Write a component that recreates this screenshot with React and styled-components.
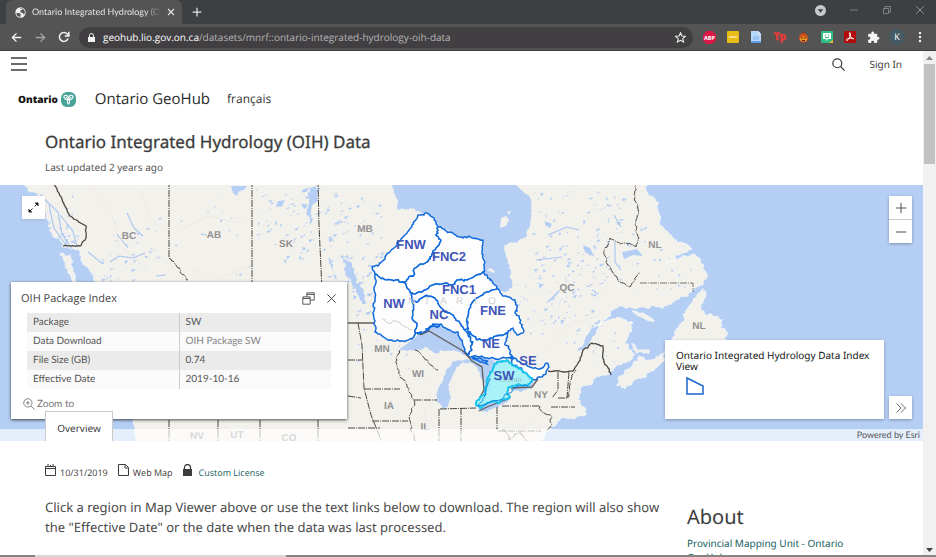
import React from "react";
import styled, { createGlobalStyle } from "styled-components";

const Global = createGlobalStyle`
  * { box-sizing: border-box; }
  html, body, #root { height: 100%; }
  body { margin: 0; background: #fff; font-family: "Noto Sans", "Open Sans", sans-serif; color: #3c3c3c; text-rendering: geometricPrecision; }
  button { border: 0; padding: 0; background: none; color: inherit; font: inherit; cursor: pointer; text-rendering: inherit; }
  h1, h2, p { margin: 0; font-weight: 400; }
  a { color: #17605f; text-decoration: none; }
  svg { display: block; }
`;

/* ---------- browser frame ---------- */

const Window = styled.div`
  display: flex;
  flex-direction: column;
  height: 100vh;
  overflow: hidden;
`;

const TabStrip = styled.div`
  display: flex;
  align-items: stretch;
  height: 24px;
  flex: none;
  padding-left: 6px;
  background: #3c4043;
  color: #e3e3e3;
`;

const BrowserTab = styled.div`
  display: flex;
  align-items: center;
  gap: 6px;
  width: 176px;
  padding: 0 7px 0 9px;
  border-radius: 6px 6px 0 0;
  background: #545454;
`;

const TabTitle = styled.span`
  flex: 1;
  overflow: hidden;
  white-space: nowrap;
  font: 9px/14px Lato, sans-serif;
  mask-image: linear-gradient(to right, #000 88%, transparent);
`;

const NewTab = styled.button`
  width: 30px;
  display: grid;
  place-items: center;
`;

const WindowButtons = styled.div`
  display: grid;
  grid-template-columns: repeat(4, 33px);
  margin-left: auto;
  color: #999c9e;
  button { display: grid; place-items: center; padding-bottom: 4px; }
`;

const Toolbar = styled.div`
  display: flex;
  align-items: center;
  height: 27px;
  flex: none;
  padding: 0 4px 0 4px;
  background: #545454;
  border-bottom: 1px solid #3f3f3f;
  color: #f2f2f2;
`;

const NavButton = styled.button`
  width: 24px;
  height: 22px;
  display: grid;
  place-items: center;
  opacity: ${(p) => (p.disabled ? 0.5 : 1)};
`;

const AddressBar = styled.label`
  display: flex;
  align-items: center;
  flex: 1;
  height: 21px;
  margin-left: 3px;
  padding: 0 7px 0 9px;
  gap: 8px;
  border-radius: 11px;
  background: #413f42;
  font: 10px/14px "Open Sans", sans-serif;
`;

const Address = styled.span`
  flex: 1;
  color: #b5b5b5;
  b { font-weight: 500; color: #fff; }
`;

const Extensions = styled.div`
  display: grid;
  grid-template-columns: repeat(10, 1fr);
  width: 234px;
  margin-left: 5px;
  button { display: grid; place-items: center; }
`;

const Viewport = styled.div`
  display: flex;
  flex: 1;
  min-height: 0;
`;

const Scrollbar = styled.div`
  display: flex;
  flex-direction: column;
  align-items: center;
  width: 13px;
  flex: none;
  padding: 5px 1px 2px;
  background: #f1f1f1;
`;

const Thumb = styled.div`
  width: 11px;
  height: 100px;
  margin: 3px 0 auto;
  background: #c1c1c1;
`;

const DesktopEdge = styled.div`
  height: 2px;
  flex: none;
  background: linear-gradient(to right, #858585 35px, #d8d8d8 35px, #d8d8d8 286px, #858585 286px);
`;

/* ---------- page ---------- */

const Page = styled.div`
  flex: 1;
  min-width: 0;
  overflow: hidden;
  background: #fff;
`;

const TopBar = styled.header`
  display: flex;
  align-items: center;
  height: 26px;
  padding: 0 21px 0 11px;
`;

const SignIn = styled.button`
  margin-left: 24px;
  font-size: 10px;
  line-height: 16px;
`;

const Search = styled.button`
  margin-left: auto;
`;

const BrandRow = styled.nav`
  display: flex;
  align-items: center;
  height: 44px;
  padding-left: 18px;
  font-family: "Open Sans", sans-serif;
`;

const Logo = styled.a`
  display: flex;
  align-items: center;
  gap: 3px;
  margin-right: 19px;
  color: #111;
  font: 800 10px/16px "Open Sans", sans-serif;
`;

const SiteName = styled.a`
  margin-right: 17px;
  color: #2b2b2b;
  font-size: 15px;
  line-height: 20px;
`;

const Language = styled.a`
  color: #333;
  font-size: 12px;
  line-height: 18px;
`;

const Heading = styled.div`
  height: 64px;
  padding: 8px 45px 0;
`;

const Title = styled.h1`
  font-size: 17px;
  line-height: 26px;
  -webkit-text-stroke: 0.3px currentColor;
`;

const Updated = styled.p`
  margin-top: 4px;
  color: #555;
  font-size: 10px;
  line-height: 16px;
`;

const MapFrame = styled.section`
  position: relative;
  height: 256px;
  background: #b5cff4;
  overflow: hidden;
`;

const MapDrawing = styled.svg`
  width: 100%;
  height: 100%;
`;

const Floating = styled.div`
  position: absolute;
  top: ${(p) => p.$top ?? "auto"};
  right: ${(p) => p.$right ?? "auto"};
  bottom: ${(p) => p.$bottom ?? "auto"};
  left: ${(p) => p.$left ?? "auto"};
  width: ${(p) => p.$width};
  background: #fff;
  box-shadow: 0 1px 3px rgba(0, 0, 0, ${(p) => p.$shade ?? 0.3});
`;

const MapButton = styled.button`
  display: grid;
  place-items: center;
  width: 23px;
  height: 23px;
  color: #555;
  & + & { border-top: 1px solid #ccc; height: 24px; }
`;

const PopupHead = styled.div`
  display: flex;
  align-items: center;
  gap: 11px;
  height: 31px;
  padding: 2px 10px 0;
  color: #444;
`;

const PopupTitle = styled.h2`
  flex: 1;
  font-family: "Open Sans", sans-serif;
  font-size: 11px;
  line-height: 16px;
`;

const Fields = styled.table`
  width: 304px;
  margin-left: 16px;
  border-collapse: collapse;
  color: #555;
  font: 10px/15px Lato, sans-serif;
  tr:nth-child(odd) { background: #ebebeb; }
  tr:nth-child(even) { background: #fafafa; }
  th, td { height: 19px; padding: 2px 6px; text-align: left; font-weight: 400; }
  th { width: 50%; border-right: 1px solid #ccc; }
  a { color: #858585; }
`;

const ZoomTo = styled.button`
  display: flex;
  align-items: center;
  gap: 2px;
  height: 30px;
  margin-left: 12px;
  color: #777;
  font: 10px/14px Lato, sans-serif;
`;

const Legend = styled.div`
  height: 79px;
  padding: 10px 11px;
  color: #151515;
  p { font-size: 10px; line-height: 11px; }
  svg { margin: 4px 0 0 9px; }
`;

const Attribution = styled.div`
  position: absolute;
  inset: auto 0 0 0;
  height: 12px;
  padding-right: 3px;
  background: rgba(255, 255, 255, 0.65);
  color: #555;
  font: 9px/12px Lato, sans-serif;
  text-align: right;
`;

const OverviewTab = styled.button`
  position: absolute;
  left: 45px;
  bottom: 0;
  width: 68px;
  height: 30px;
  padding-top: 2px;
  border: 1px solid #ccc;
  border-bottom: 0;
  background: #fff;
  color: #444;
  font-size: 10px;
`;

const Details = styled.main`
  display: grid;
  grid-template-columns: minmax(0, 642px) minmax(0, 1fr);
  padding: 22px 45px 0;
`;

const Meta = styled.div`
  display: flex;
  align-items: flex-end;
  gap: 10px;
  height: 16px;
  font: 9px/12px "Open Sans", sans-serif;
`;

const MetaItem = styled.span`
  display: flex;
  align-items: flex-end;
  gap: ${(p) => p.$gap ?? "4px"};
  svg { margin-bottom: 3px; }
`;

const Description = styled.p`
  margin-top: 18px;
  padding-right: 12px;
  color: #4a4a4a;
  font-size: 13px;
  line-height: 20px;
`;

const About = styled.aside`
  padding-top: 40px;
  h2 { font-size: 20px; line-height: 28px; }
  a { display: block; width: 170px; margin-top: 5px; font-size: 10px; line-height: 14px; }
`;

/* ---------- map geometry ---------- */

function randomFrom(seed) {
  let s = seed;
  return () => {
    s = (s * 16807) % 2147483647;
    return s / 2147483647;
  };
}

/* Subdivides a polyline with small offsets so that borders look surveyed. */
function rough(text, amp = 2, closed = true, seed = 7) {
  let pts = text.trim().split(/\s+/).map((p) => p.split(",").map(Number));
  if (closed) pts.push(pts[0]);
  for (let k = 0; k < 3; k++) {
    const out = [];
    for (let i = 0; i < pts.length - 1; i++) {
      const [a, b] = pts[i];
      const [c, d] = pts[i + 1];
      const len = Math.hypot(c - a, d - b);
      out.push(pts[i]);
      if (len > 2.2) {
        /* the offset depends only on the segment, so shared edges stay together */
        const r = randomFrom(Math.round(Math.abs((a + c) * 131 + (b + d) * 977)) + seed);
        r();
        const q = Math.min(amp, len / 3);
        out.push([(a + c) / 2 + (r() - 0.5) * 2 * q, (b + d) / 2 + (r() - 0.5) * 2 * q]);
      }
    }
    out.push(pts[pts.length - 1]);
    pts = out;
  }
  return "M" + pts.map(([x, y]) => x.toFixed(1) + " " + y.toFixed(1)).join("L") + (closed ? "Z" : "");
}

/* [x, y, width, height, count, size] */
const lakeFields = [
  [255, 190, 60, 75, 60, 3], [298, 188, 18, 40, 14, 6], [322, 190, 60, 75, 60, 3], [325, 255, 45, 60, 35, 4],
  [110, 215, 50, 60, 18, 3], [100, 250, 60, 30, 22, 3], [175, 190, 75, 85, 18, 2], [532, 190, 80, 80, 60, 3],
  [532, 255, 80, 75, 60, 3], [600, 190, 45, 100, 35, 3], [515, 270, 60, 65, 45, 2], [30, 188, 45, 40, 22, 3],
  [350, 325, 60, 45, 14, 2], [565, 325, 60, 40, 18, 2], [55, 225, 25, 25, 18, 3], [650, 240, 42, 50, 14, 2],
  [325, 290, 60, 30, 14, 2], [400, 192, 25, 12, 3, 1],
];

const lakePath = lakeFields
  .map(([x, y, w, h, n, size], k) => {
    const r = randomFrom(4001 + k * 977);
    return Array.from({ length: n }, () => {
      const px = x + r() * w;
      const py = y + r() * h;
      const a = (r() + 0.2) * size * 1.3;
      const b = (r() - 0.7) * size;
      return `M${px.toFixed(1)} ${py.toFixed(1)}l${a.toFixed(1)} ${b.toFixed(1)} ${(-a * 0.4).toFixed(1)} ${(r() * size * 0.8 + 0.5).toFixed(1)} ${(-a * 0.5).toFixed(1)} ${(r() * size * 0.3).toFixed(1)}z`;
    }).join("");
  })
  .join("");

const mainland =
  "22,180 30,192 38,197 45,205 46,217 49,228 56,238 62,247 74,249 82,256 86,266 94,276 100,290 115,320 122,350 125,390 133,420 137,445 541,445 545,434 552,426 560,420 572,418 587,414 582,406 577,399 580,388 593,380 610,374 620,365 632,359 635,355 628,349 625,342 629,334 633,323 623,320 607,321 598,328 588,346 578,351 583,344 588,334 597,326 608,317 617,307 640,307 663,308 673,302 692,292 703,282 704,265 695,254 680,258 667,264 675,256 692,250 683,243 673,238 667,231 660,225 658,208 650,196 645,180";

const waters = [
  "392,180 395,195 398,210 410,208 422,213 434,219 440,228 463,238 483,240 485,262 483,272 497,288 504,292 512,287 510,276 508,263 504,245 518,241 527,235 531,218 530,198 513,180",
  "400,350 409,342 417,336 430,327 437,323 453,330 462,338 467,355 458,352 443,351 434,353 425,347 414,350 407,351",
  "453,361 444,376 438,390 437,402 442,409 448,406 450,392 451,380 456,367 464,362 474,364 480,372 485,385 483,396 491,388 491,374 500,363 490,358 473,359",
  "478,409 488,402 500,401 511,396 507,402 492,409 482,412",
  "507,390 516,384 528,385 534,381 532,389 519,391",
  "343,258 350,261 354,271 357,284 364,291 365,304 360,300 354,286 347,277",
  "328,258 333,267 337,282 334,276",
];

const regions = {
  fnw: "372,267 378,266 385,257 397,245 405,235 412,225 418,215 425,213 432,217 438,227 436,235 441,240 437,247 432,255 427,262 415,268 414,275 403,282 387,280 375,274",
  fnc2: "438,227 450,232 463,238 472,238 483,240 482,252 485,262 483,272 467,280 457,280 455,284 433,285 417,293 412,293 403,282 414,275 415,268 427,262 432,255 437,247 441,240 436,235",
  nw: "375,274 387,280 403,282 412,293 413,303 413,320 417,325 415,333 412,339 403,341 393,341 385,338 375,332 373,313 375,298",
  nc: "417,302 425,296 435,298 438,303 445,312 453,315 460,323 465,330 473,342 472,350 467,355 462,340 458,332 450,330 442,325 433,324 428,331 415,333 417,325 413,320 413,303",
  fnc1: "412,293 417,293 433,285 455,284 457,280 467,280 483,272 490,280 497,289 487,292 475,300 470,308 468,317 468,328 465,330 460,323 453,315 445,312 438,303 435,298 425,296 417,302 413,303",
  fne: "487,292 497,289 505,296 515,300 517,308 515,313 522,325 523,333 517,335 513,328 508,332 503,335 493,338 485,340 477,340 468,332 468,317 470,308 475,300",
  ne: "468,332 477,340 485,340 493,338 503,335 508,333 505,343 510,350 512,359 497,359 485,358 470,357 467,355 472,350 473,342",
  se: "512,356 517,361 530,367 542,368 547,363 549,367 543,375 535,380 531,380 522,370 512,365",
};

const southWest =
  "497,362 507,360 512,365 522,370 532,378 528,386 517,385 508,388 507,394 510,397 500,402 487,403 480,408 476,405 478,400 485,395 485,388 488,380 490,372 493,370";

const dashed = [
  "169,180 169,258", "252,180 252,290", "318,180 319,225 322,290",
  "358,323 362,345 364,388 371,415 381,440", "348,360 363,360", "348,396 361,398", "348,428 380,428",
  "364,389 400,389", "372,421 408,421", "414,400 437,400", "439,409 439,442", "461,408 461,442",
  "497,407 497,430", "440,409 476,408", "502,406 540,406", "558,372 558,390 552,398", "558,398 568,398",
  "569,372 567,398", "169,420 169,442", "218,420 218,442", "260,420 260,442", "318,420 318,442",
  "498,431 541,431", "551,407 575,407",
];

const roughDashed = [
  "169,258 176,265 180,272 188,280", "400,350 397,360 399,374 407,385 411,394 415,405 409,416 410,430 416,442",
  "415,350 428,360 438,370", "540,406 545,414 552,417 551,426 546,430",
  "635,180 634,195 638,205 635,225 639,238 637,246 628,244 617,242 610,238 604,250 606,262 613,272 618,281 630,287 636,277 640,273",
  "568,398 570,385 576,370", "502,430 510,440 520,432 528,442",
];

const placeNames = [
  ["BC", 129, 239], ["AB", 214, 238], ["SK", 286, 247], ["MB", 365, 232], ["QC", 567, 291], ["NL", 655, 248],
  ["NL", 699, 329], ["MN", 382, 352], ["WI", 418, 377], ["IA", 389, 409], ["IL", 425, 430], ["NY", 541, 398],
];

const fadedNames = [["NV", 197, 439], ["UT", 237, 438], ["CO", 289, 441]];

const regionNames = [
  ["FNW", 411, 249], ["FNC2", 449, 261], ["FNC1", 459, 294], ["NW", 394, 308], ["NC", 439, 319],
  ["FNE", 493, 315], ["NE", 491, 348], ["SE", 528, 365], ["SW", 504, 380],
];

const Place = styled.text`
  fill: #909090;
  font: bold 10px "Liberation Sans", sans-serif;
  text-anchor: middle;
  paint-order: stroke;
  stroke: #f3f1ec;
  stroke-width: 2px;
`;

const Region = styled.text`
  fill: #3f56b8;
  font: bold 13px "Liberation Sans", sans-serif;
  text-anchor: middle;
`;

function HydrologyMap() {
  return (
    <MapDrawing viewBox="0 185 923 256" preserveAspectRatio="xMidYMid slice" role="img" aria-label="Map of Ontario package regions">
      <rect x="-500" y="185" width="2000" height="256" fill="#b5cff4" />
      <g fill="#f3f1ec" stroke="#fafbfc" strokeWidth="0.6">
        <path d={rough(mainland, 2.5)} />
        <path d={rough("60,253 66,256 71,254 71,265 76,276 78,285 72,280 65,268", 1.5)} />
        <path d={rough("703,288 697,295 690,305 684,318 677,328 673,345 727,345 724,338 728,333 720,328 723,319 713,316 704,311 701,306 706,293", 2)} />
        <path d={rough("632,311 643,313 654,320 648,321 638,316", 1)} />
        <path d={rough("617,386 625,389 635,380 646,374 665,360 665,351 656,356 649,360 640,356 634,362 630,368 620,376", 2)} />
        <path d={rough("632,343 638,350 650,350 649,354 636,353", 1)} />
      </g>
      <g fill="none" stroke="#e9e6e0" strokeWidth="0.6">
        <path d="M92 188l20 28 8 30 22 18M140 190l12 30 14 12M180 230l28 -14 36 8M190 270l30 8 30-12M350 310l30 8M410 365l18 20M430 440l-6-30M520 430l20-20M545 350l20-24 32-10M590 270l15 25M540 215l30 14" />
      </g>
      <path d={lakePath} fill="#b5cff4" />
      <g fill="#b5cff4">
        {waters.map((d) => <path key={d} d={rough(d, 1.3)} />)}
        <path d="M231 186h16l-3 4-5 1-2 5-4-3zM310 188l6-2 2 15-6 4-2 12-4-3 3-11zM278 201l6 0-2 5-6 1zM583 245l7 3 4 8-5-1-5-5zM622 252l15-3 6 7-10-1-9 4zM545 221l7 3-2 4-5-3z" />
        <path d="M546 303l12-12 4-2-10 11-5 3z" />
      </g>
      <g fill="none" stroke="#a8c5f0">
        <path d="M127 213l7 15 9 8M117 234l11 14M110 262l9-6 14 2 12-5M88 252l15 12M40 195l18 17 4 22 12 18M49 205l5 23 14 20M60 215l13 16 4 16M156 276l10-1M201 234l9 2M592 290q6 2 3 6l-4-2M615 242v20l6 8M548 235l19-8 12 3M536 260l26-3M614 215l7 12" strokeWidth="1.1" />
      </g>
      <g fill="#f3f1ec">
        <path d="M487 270l3-2 5 3-1 2zM501 218l5-2 3 4-3 6-6 2zM507 212l4-1-2 4z" />
      </g>
      <g fill="none" stroke="#4b4843" strokeWidth="1" strokeDasharray="7 1 1 1">
        {dashed.map((d) => <path key={d} d={"M" + d} />)}
        {roughDashed.map((d) => <path key={d} d={rough(d, 1.2, false)} />)}
        <path d="M640 283h53v9" stroke="#7d7869" />
      </g>
      <g fill="none" stroke="#4b4843" strokeWidth="1.3">
        <path d={rough("54,184 62,199 70,216 78,221 86,226 86,238 80,246 63,246", 0.6, false)} />
        <path d="M348 323h27" />
        <path d={rough("548,371 573,371 578,363 583,350 592,343 603,346 604,362 611,375", 0.8, false)} />
      </g>
      <g fill="#fff" fillOpacity="0.86" stroke="#126bdc" strokeWidth="1.5" strokeLinejoin="round">
        {Object.entries(regions).map(([key, d]) => <path key={key} d={rough(d, 1.2)} />)}
      </g>
      <path d={rough("382,318 388,323 396,321 404,326 412,330", 1.5, false)} fill="none" stroke="#cfccc6" />
      <path d={rough("472,358 480,358 488,361 487,364 480,362", 1)} fill="#8fb4ee" stroke="#126bdc" strokeWidth="1.5" />
      <path d={rough("417,334 426,332 433,325 440,326", 1.4, false)} fill="none" stroke="#126bdc" strokeWidth="2" />
      <path d="M420 335l9-4 34 20 9 10 10 6 2 23-4 7M479 411l8-4 23-9M511 388l21-1 6-8" fill="none" stroke="#605d5d" strokeWidth="1.3" />
      <path d={rough(southWest, 1)} fill="#a0f2fa" fillOpacity="0.9" stroke="#18c3ec" strokeWidth="2" strokeLinejoin="round" />
      <path d={rough("490,378 488,384 486,394 478,406 500,400 507,394 517,386 528,386", 1, false)} fill="none" stroke="#1389d9" strokeWidth="1" />
      <g fill="#d2d0d2" fontFamily="Liberation Sans, sans-serif" fontSize="10">
        <text x="408" y="304">N</text><text x="424" y="304">T</text><text x="440" y="304">A</text>
        <text x="456" y="304">R</text><text x="474" y="304">I</text><text x="488" y="304">O</text>
      </g>
      <text x="498" y="382" fill="#91bfc5" fontFamily="Liberation Sans, sans-serif" fontSize="7">Toronto</text>
      {placeNames.map(([name, x, y]) => <Place key={name + x} x={x} y={y}>{name}</Place>)}
      {fadedNames.map(([name, x, y]) => <Place key={name} x={x} y={y}>{name}</Place>)}
      {regionNames.map(([name, x, y]) => <Region key={name} x={x} y={y}>{name}</Region>)}
    </MapDrawing>
  );
}

/* ---------- icons ---------- */

const Icon = ({ size = 12, width = 1.4, box = 16, fill = "none", children }) => (
  <svg width={size} height={size} viewBox={`0 0 ${box} ${box}`} fill={fill} stroke="currentColor" strokeWidth={width} aria-hidden="true">
    {children}
  </svg>
);

const Globe = () => (
  <svg width="11" height="11" viewBox="0 0 16 16" aria-hidden="true">
    <circle cx="8" cy="8" r="7.5" fill="#f4f4f4" />
    <path d="M2 8.500l5 .5 1.500 2-1 3.500C4 14.500 2 12 2 8.500zM7 2c1-.7 3-.5 4 .3L10 4.500 7.500 5.500 8 8l3 .5 1.500 2 1.500-.5c1-4-.5-6.500-3-7.500z" fill="#545454" />
  </svg>
);

const Close = ({ size }) => <Icon size={size}><path d="M2 2l12 12M14 2L2 14" /></Icon>;

const extensions = [
  ["Adblock Plus", <svg width="13" height="13" viewBox="0 0 14 14"><path d="M4 0h6l4 4v6l-4 4H4l-4-4V4z" fill="#dc1846" /><text x="7" y="9.200" fill="#fff" fontSize="6" fontWeight="bold" fontFamily="Open Sans, sans-serif" textAnchor="middle">ABP</text></svg>],
  ["Password manager", <svg width="12" height="12" viewBox="0 0 12 12"><rect width="12" height="12" rx="1" fill="#e8bd13" /><path d="M2 6h8" stroke="#fff" strokeWidth="1.500" strokeDasharray="1.400 .7" /></svg>],
  ["Documents", <svg width="10" height="12" viewBox="0 0 10 12"><path d="M0 0h7l3 3v9H0z" fill="#b6d9fa" /><path d="M7 0v3h3" fill="#e6f3ff" /><path d="M2 6h6M2 8h6" stroke="#7fb2e5" /><path d="M0 10h10v2H0z" fill="#5f9be2" /></svg>],
  ["Tp", <svg width="16" height="16" viewBox="0 0 16 16"><text x="8" y="11" fill="#e43d3b" stroke="#e43d3b" strokeWidth=".7" fontSize="10" fontWeight="bold" fontFamily="Open Sans, sans-serif" textAnchor="middle">Tp</text></svg>],
  ["Mascot", <svg width="11" height="12" viewBox="0 0 11 12"><path d="M5 3L4 0l3 2-1 2z" fill="#a62c16" /><circle cx="5.500" cy="7" r="4.500" fill="#d55018" /><ellipse cx="5.500" cy="8" rx="3.500" ry="2.500" fill="#f19d26" /><path d="M4 6v2M7 6v2M4 9.500h3" stroke="#55200f" /></svg>],
  ["Bitmoji", <svg width="12" height="12" viewBox="0 0 12 12"><rect width="12" height="12" rx="1" fill="#31bd82" /><path d="M2 2h8v6H7l-2 2V8H2z" fill="#fff" /><path d="M4 4h1M7 4h1M4 6q2 2 4 0" fill="none" stroke="#26a26d" /><path d="M8 12h4V9z" fill="#f3b62e" /></svg>],
  ["Acrobat", <svg width="12" height="12" viewBox="0 0 12 12"><rect width="12" height="12" rx="1" fill="#b30b0b" /><path d="M6 2c1 0 .5 3-1 5.500S2 10 2.500 8.500 9 6.500 9.500 7.700 6 6.500 5.500 3.500 6 2 6 2z" fill="none" stroke="#fff" strokeWidth="1" /></svg>],
  ["Extensions", <svg width="13" height="13" viewBox="0 0 24 24" fill="#f4f4f4"><path d="M20.500 11H19V7a2 2 0 0 0-2-2h-4V3.500a2.500 2.500 0 0 0-5 0V5H4a2 2 0 0 0-2 2v3.800h1.500a2.700 2.700 0 0 1 0 5.400H2V20a2 2 0 0 0 2 2h3.800v-1.500a2.700 2.700 0 0 1 5.400 0V22H17a2 2 0 0 0 2-2v-4h1.500a2.500 2.500 0 0 0 0-5z" /></svg>],
  ["Profile", <svg width="16" height="16" viewBox="0 0 16 16"><circle cx="8" cy="8" r="8" fill="#455a64" /><text x="8" y="11" fill="#fff" fontSize="9" fontFamily="Open Sans, sans-serif" textAnchor="middle">K</text></svg>],
  ["Menu", <svg width="4" height="12" viewBox="0 0 4 12" fill="#f4f4f4"><circle cx="2" cy="2" r="1.200" /><circle cx="2" cy="6" r="1.200" /><circle cx="2" cy="10" r="1.200" /></svg>],
];

/* ---------- sections ---------- */

function Chrome() {
  return (
    <>
      <TabStrip>
        <BrowserTab>
          <Globe />
          <TabTitle>Ontario Integrated Hydrology (OIH) Data</TabTitle>
          <button aria-label="Close tab"><Icon size={8} width={2.2}><path d="M2 2l12 12M14 2L2 14" /></Icon></button>
        </BrowserTab>
        <NewTab aria-label="New tab"><Icon size={10} width={2}><path d="M8 1v14M1 8h14" /></Icon></NewTab>
        <WindowButtons>
          <button aria-label="Tab search">
            <svg width="11" height="11" viewBox="0 0 12 12"><circle cx="6" cy="6" r="6" fill="#c6c8ca" /><path d="M3 4.500h6L6 8.500z" fill="#3c4043" /></svg>
          </button>
          <button aria-label="Minimize"><Icon size={8}><path d="M0 8h16" /></Icon></button>
          <button aria-label="Restore"><Icon size={8}><path d="M1 5h10v10H1zM4 5V1h11v11h-4" /></Icon></button>
          <button aria-label="Close window"><Close size={10} /></button>
        </WindowButtons>
      </TabStrip>
      <Toolbar>
        <NavButton aria-label="Back"><Icon size={11} width={2}><path d="M15 8H2M8 2L2 8l6 6" /></Icon></NavButton>
        <NavButton aria-label="Forward" disabled><Icon size={11} width={2}><path d="M1 8h13M8 2l6 6-6 6" /></Icon></NavButton>
        <NavButton aria-label="Reload"><Icon size={12} width={2}><path d="M13.500 10A6 6 0 1 1 12.500 4L14 6M14.500 1v5.500H9" /></Icon></NavButton>
        <AddressBar>
          <svg width="7" height="9" viewBox="0 0 7 9" aria-hidden="true"><path d="M0 4h7v5H0z" fill="#f2f2f2" /><path d="M1.500 4V2.500a2 2 0 0 1 4 0V4" fill="none" stroke="#f2f2f2" /></svg>
          <Address><b>geohub.lio.gov.on.ca</b>/datasets/mnrf::ontario-integrated-hydrology-oih-data</Address>
          <Icon size={11} width={1.5}><path d="M8 1l2.100 4.700 5 .5-3.800 3.400 1.200 5L8 12l-4.500 2.600 1.200-5L.9 6.200l5-.5z" /></Icon>
        </AddressBar>
        <Extensions>
          {extensions.map(([label, icon]) => <button key={label} aria-label={label}>{icon}</button>)}
        </Extensions>
      </Toolbar>
    </>
  );
}

const fields = [
  ["Package", "SW"],
  ["Data Download", <a href="#download">OIH Package SW</a>],
  ["File Size (GB)", "0.74"],
  ["Effective Date", "2019-10-16"],
];

function Popup() {
  return (
    <Floating $left="11px" $top="97px" $width="336px" $shade={0.7}>
      <PopupHead>
        <PopupTitle>OIH Package Index</PopupTitle>
        <button aria-label="Dock"><Icon size={13} width={1.1}><path d="M1 6h9v9H1zM1 8h9M6 6V1h9v9h-5M6 3h9" /></Icon></button>
        <button aria-label="Close"><Close size={11} /></button>
      </PopupHead>
      <Fields>
        <tbody>
          {fields.map(([name, value]) => (
            <tr key={name}><th scope="row">{name}</th><td>{value}</td></tr>
          ))}
        </tbody>
      </Fields>
      <ZoomTo>
        <Icon size={12} width={1.2}><circle cx="6.500" cy="6.500" r="5.500" /><path d="M10.500 10.500l5 5M4 6.500h5M6.500 4v5" /></Icon>
        Zoom to
      </ZoomTo>
    </Floating>
  );
}

export default function App() {
  return (
    <Window>
      <Global />
      <Chrome />
      <Viewport>
        <Page>
          <TopBar>
            <button aria-label="Menu">
              <svg width="16" height="14" viewBox="0 0 16 14" stroke="#3c3c3c" strokeWidth="1.500"><path d="M0 1h16M0 7h16M0 13h16" /></svg>
            </button>
            <Search aria-label="Search"><Icon size={13} width={1.5}><circle cx="6.500" cy="6.500" r="5.500" /><path d="M10.500 10.500l5 5" /></Icon></Search>
            <SignIn>Sign In</SignIn>
          </TopBar>
          <BrandRow>
            <Logo href="#ontario">
              Ontario
              <svg width="15" height="15" viewBox="0 0 15 15" aria-hidden="true">
                <rect width="15" height="15" rx="6" fill="#47a397" />
                <path d="M3 4q2-1.500 3.500 0l1 2 1-2Q10 2.500 12 4q.5 2-2 3.500L8.500 8v2.500l-1 1.500-1-1.500V8L5 7.500Q2.500 6 3 4zM5 5l2.500 3L10 5" fill="none" stroke="#fff" strokeWidth="1.100" />
              </svg>
            </Logo>
            <SiteName href="#home">Ontario GeoHub</SiteName>
            <Language href="#fr">français</Language>
          </BrandRow>
          <Heading>
            <Title>Ontario Integrated Hydrology (OIH) Data</Title>
            <Updated>Last updated 2 years ago</Updated>
          </Heading>
          <MapFrame>
            <HydrologyMap />
            <Attribution>Powered by Esri</Attribution>
            <Floating $left="22px" $top="11px" $width="23px" $shade={0.1}>
              <MapButton aria-label="Full screen">
                <svg width="11" height="11" viewBox="0 0 12 12" fill="#222" stroke="#222"><path d="M7 5l3-3M5 7l-3 3" /><path d="M8 1h3v3zM1 8v3h3z" /></svg>
              </MapButton>
            </Floating>
            <Floating $right="11px" $top="11px" $width="23px">
              <MapButton aria-label="Zoom in"><Icon size={12}><path d="M8 1v14M1 8h14" /></Icon></MapButton>
              <MapButton aria-label="Zoom out"><Icon size={12}><path d="M1 8h14" /></Icon></MapButton>
            </Floating>
            <Popup />
            <Floating $right="39px" $bottom="22px" $width="219px">
              <Legend>
                <p>Ontario Integrated Hydrology Data Index View</p>
                <svg width="20" height="20" viewBox="0 0 20 20" aria-hidden="true"><path d="M2 2l16 8v8H2z" fill="none" stroke="#1b66cc" strokeWidth="1.500" /></svg>
              </Legend>
            </Floating>
            <Floating $right="11px" $bottom="22px" $width="23px">
              <MapButton aria-label="Collapse legend"><Icon size={12} width={1.2}><path d="M2 2l6 6-6 6M8 2l6 6-6 6" /></Icon></MapButton>
            </Floating>
            <OverviewTab>Overview</OverviewTab>
          </MapFrame>
          <Details>
            <div>
              <Meta>
                <MetaItem>
                  <svg width="11" height="12" viewBox="0 0 11 12" fill="none" stroke="#3c3c3c" aria-hidden="true"><path d="M.5 2.500h10v9H.5zM.5 4.500h10M3 0v3M8 0v3M5.500 1v2" /></svg>
                  10/31/2019
                </MetaItem>
                <MetaItem>
                  <svg width="11" height="12" viewBox="0 0 11 12" fill="none" stroke="#3c3c3c" aria-hidden="true"><path d="M.5.5h7l3 3v8H.5zM7 .5V4h3.500" /></svg>
                  Web Map
                </MetaItem>
                <MetaItem $gap="7px">
                  <svg width="9" height="12" viewBox="0 0 9 12" aria-hidden="true"><path d="M0 5h9v7H0z" fill="#3c3c3c" /><path d="M1.500 5V3.500a3 3 0 0 1 6 0V5" fill="none" stroke="#3c3c3c" strokeWidth="1.300" /></svg>
                  <a href="#license">Custom License</a>
                </MetaItem>
              </Meta>
              <Description>
                Click a region in Map Viewer above or use the text links below to download. The region will also show the "Effective Date" or the date when the data was last processed.
              </Description>
            </div>
            <About>
              <h2>About</h2>
              <a href="#unit">Provincial Mapping Unit - Ontario GeoHub</a>
            </About>
          </Details>
        </Page>
        <Scrollbar>
          <svg width="7" height="5" viewBox="0 0 7 5" fill="#858585" aria-hidden="true"><path d="M0 4l3.500-4L7 4z" /></svg>
          <Thumb />
          <svg width="7" height="5" viewBox="0 0 7 5" fill="#444" aria-hidden="true"><path d="M0 0l3.500 4L7 0z" /></svg>
        </Scrollbar>
      </Viewport>
      <DesktopEdge />
    </Window>
  );
}
